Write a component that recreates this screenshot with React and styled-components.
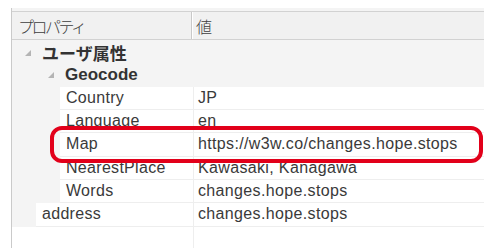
import React from "react";
import styled, { createGlobalStyle } from "styled-components";

const Global = createGlobalStyle`
  html, body { margin: 0; padding: 0; background: #ffffff; }
  body { font-family: "Liberation Sans", "Noto Sans CJK JP", sans-serif; }
`;

const Page = styled.div`
  width: 502px;
  height: 252px;
  padding: 8px 0 0 11px;
  box-sizing: border-box;
`;

const Panel = styled.div`
  position: relative;
  width: 472px;
  height: 240px;
  border-left: 1px solid #cacaca;
  display: flex;
  flex-direction: column;
  background: #ffffff;
`;

const TopStrip = styled.div`
  height: 3px;
  background: #f4f4f4;
`;

const Header = styled.div`
  display: grid;
  grid-template-columns: 180px 1fr;
  height: 27px;
  border-top: 1px solid #d2d2d2;
  border-bottom: 1px solid #d2d2d2;
  background: #f1f1f1;
`;

const HeaderCell = styled.div`
  display: flex;
  align-items: center;
  padding-left: ${(p) => p.$pad}px;
  font-family: "Noto Sans CJK JP", sans-serif;
  font-size: 16px;
  font-weight: 300;
  color: #3e3e3e;
  letter-spacing: ${(p) => p.$ls || 0}px;
  border-right: ${(p) => (p.$divider ? "1px solid #c9c9c9" : "none")};
  box-shadow: ${(p) => (p.$divider ? "1px 0 0 #ffffff" : "none")};
`;

const Rows = styled.div`
  display: grid;
  grid-auto-rows: 23.33px;
`;

const Row = styled.div`
  display: grid;
  grid-template-columns: 181px 1fr;
  background: ${(p) => (p.$group ? "#f4f4f4" : "#ffffff")};
`;

const NameCell = styled.div`
  display: flex;
  align-items: stretch;
  min-width: 0;
`;

const Indent = styled.div`
  width: ${(p) => p.$w}px;
  flex: none;
  background: #f4f4f4;
  display: flex;
  align-items: center;
  justify-content: flex-end;
  box-sizing: border-box;
`;

const Label = styled.div`
  flex: 1;
  display: flex;
  align-items: center;
  padding-left: 6px;
  font-size: 16px;
  letter-spacing: 0.3px;
  color: #3a3a3a;
  white-space: nowrap;
  border-bottom: 1px solid #eeeeee;
`;

const GroupLabel = styled.div`
  flex: 1;
  display: flex;
  align-items: center;
  padding-left: 11px;
  font-size: 17px;
  font-weight: 700;
  color: #333333;
  white-space: nowrap;
  font-family: ${(p) =>
    p.$jp
      ? '"Noto Sans CJK JP", sans-serif'
      : '"Liberation Sans", "Noto Sans CJK JP", sans-serif'};
`;

const Value = styled.div`
  display: flex;
  align-items: center;
  padding-left: 4px;
  font-size: 16px;
  letter-spacing: 0.35px;
  color: #3a3a3a;
  white-space: nowrap;
  border-left: 1px solid #eeeeee;
  border-bottom: 1px solid #eeeeee;
`;

const Filler = styled.div`
  flex: 1;
  display: grid;
  grid-template-columns: 181px 1fr;
`;

const FillerValue = styled.div`
  border-left: 1px solid #eeeeee;
`;

const Highlight = styled.div`
  position: absolute;
  left: 38px;
  top: 117.5px;
  width: 433px;
  height: 37.5px;
  box-sizing: border-box;
  border: 4.5px solid #e2001a;
  border-radius: 12px;
  pointer-events: none;
`;

const Arrow = () => (
  <svg width="6" height="6" viewBox="0 0 6 6">
    <polygon points="6,0 6,6 0,6" fill="#b4b4b4" />
  </svg>
);

const data = [
  { type: "group", depth: 0, name: "ユーザ属性", jp: true },
  { type: "group", depth: 1, name: "Geocode" },
  { type: "leaf", indent: 48, name: "Country", value: "JP" },
  { type: "leaf", indent: 48, name: "Language", value: "en" },
  { type: "leaf", indent: 48, name: "Map", value: "https://w3w.co/changes.hope.stops" },
  { type: "leaf", indent: 48, name: "NearestPlace", value: "Kawasaki, Kanagawa" },
  { type: "leaf", indent: 48, name: "Words", value: "changes.hope.stops" },
  { type: "leaf", indent: 24, name: "address", value: "changes.hope.stops" },
];

export default function App() {
  return (
    <>
      <Global />
      <Page>
        <Panel>
          <TopStrip />
          <Header>
            <HeaderCell $pad={6} $ls={-2.5} $divider>
              プロパティ
            </HeaderCell>
            <HeaderCell $pad={4}>値</HeaderCell>
          </Header>
          <Rows>
            {data.map((r) =>
              r.type === "group" ? (
                <Row key={r.name} $group>
                  <NameCell>
                    <Indent $w={r.depth === 0 ? 19 : 42}>
                      <Arrow />
                    </Indent>
                    <GroupLabel $jp={r.jp}>{r.name}</GroupLabel>
                  </NameCell>
                  <div />
                </Row>
              ) : (
                <Row key={r.name}>
                  <NameCell>
                    <Indent $w={r.indent} />
                    <Label>{r.name}</Label>
                  </NameCell>
                  <Value>{r.value}</Value>
                </Row>
              )
            )}
          </Rows>
          <Filler>
            <div />
            <FillerValue />
          </Filler>
          <Highlight />
        </Panel>
      </Page>
    </>
  );
}
